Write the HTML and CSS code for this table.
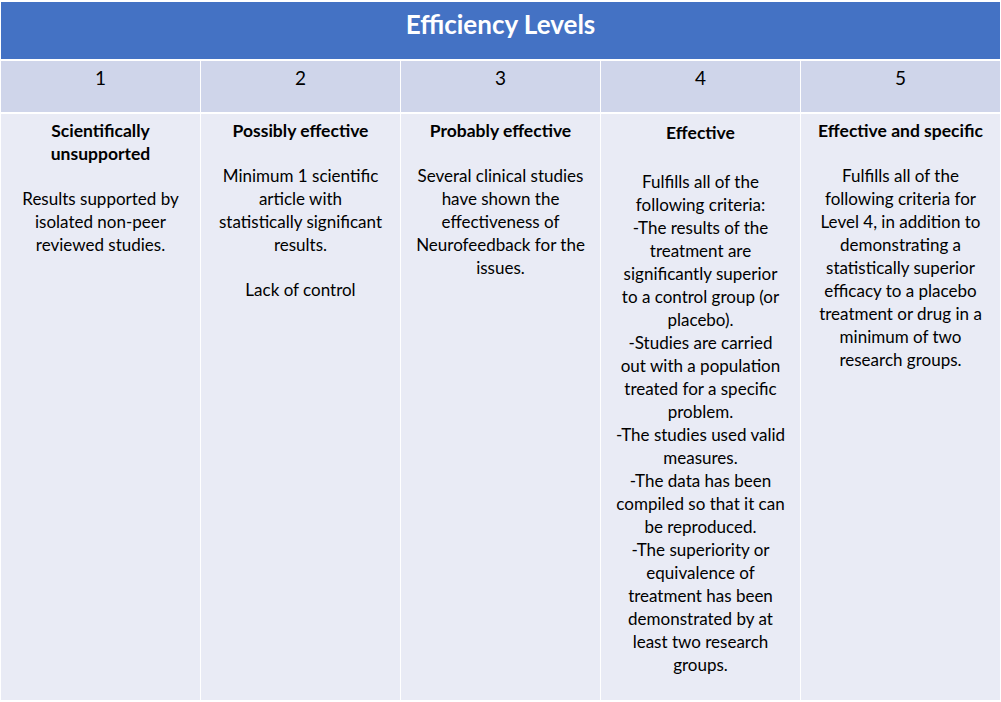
FILE: index.html
```html
<!DOCTYPE html>
<html>
<head>
<meta charset="utf-8">
<link rel="stylesheet" href="styles.css">
</head>
<body>
<div class="table">
  <div class="title">Efficiency Levels</div>
  <div class="num">1</div>
  <div class="num">2</div>
  <div class="num">3</div>
  <div class="num">4</div>
  <div class="num">5</div>
  <div class="cell">
    <p class="head">Scientifically<br>unsupported</p>
    <p class="body">Results supported by<br>isolated non-peer<br>reviewed studies.</p>
  </div>
  <div class="cell">
    <p class="head">Possibly effective</p>
    <p class="body">Minimum 1 scientific<br>article with<br>statistically significant<br>results.</p>
    <p class="body">Lack of control</p>
  </div>
  <div class="cell">
    <p class="head">Probably effective</p>
    <p class="body">Several clinical studies<br>have shown the<br>effectiveness of<br>Neurofeedback for the<br>issues.</p>
  </div>
  <div class="cell cell-4">
    <p class="head">Effective</p>
    <p class="body">Fulfills all of the<br>following criteria:<br>-The results of the<br>treatment are<br>significantly superior<br>to a control group (or<br>placebo).<br>-Studies are carried<br>out with a population<br>treated for a specific<br>problem.<br>-The studies used valid<br>measures.<br>-The data has been<br>compiled so that it can<br>be reproduced.<br>-The superiority or<br>equivalence of<br>treatment has been<br>demonstrated by at<br>least two research<br>groups.</p>
  </div>
  <div class="cell">
    <p class="head">Effective and specific</p>
    <p class="body">Fulfills all of the<br>following criteria for<br>Level 4, in addition to<br>demonstrating a<br>statistically superior<br>efficacy to a placebo<br>treatment or drug in a<br>minimum of two<br>research groups.</p>
  </div>
</div>
</body>
</html>
```

FILE: styles.css
```css
html, body {
  margin: 0;
  padding: 0;
  background: #ffffff;
}

body {
  font-family: "Lato", "Open Sans", sans-serif;
  color: #000000;
}

.table {
  display: grid;
  grid-template-columns: repeat(5, 199px);
  grid-template-rows: 57px 51px 586px;
  column-gap: 1px;
  row-gap: 2px;
  padding: 2px 1px 0 1px;
  width: 999px;
}

.title {
  grid-column: 1 / -1;
  background: #4472c4;
  color: #ffffff;
  font-weight: 700;
  font-size: 26px;
  text-align: center;
  padding-top: 7px;
  line-height: 30px;
}

.num {
  background: #cfd5ea;
  text-align: center;
  font-size: 19px;
  line-height: 24px;
  padding-top: 5px;
}

.cell {
  background: #e9ebf5;
  text-align: center;
  font-size: 17px;
  line-height: 23px;
  padding: 5px 2px 0 2px;
  white-space: nowrap;
}

.cell p {
  margin: 0;
}

.head {
  font-weight: 700;
  font-size: 17.5px;
}

.cell .body {
  margin-top: 22px;
}

.cell-4 .head {
  padding-top: 2px;
}

.cell-4 .body {
  margin-top: 26px;
}
```
